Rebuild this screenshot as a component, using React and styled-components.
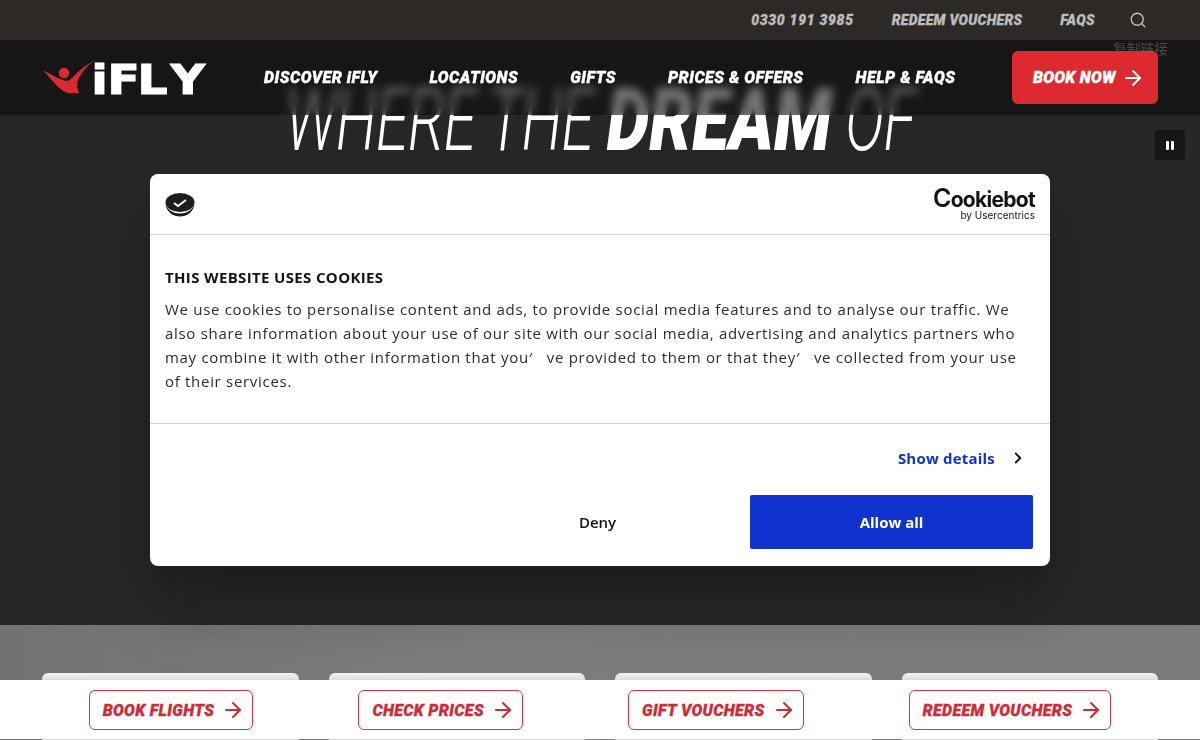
import React from 'react';
import styled, { createGlobalStyle } from 'styled-components';
import { Search, ArrowRight, ChevronRight } from 'lucide-react';

const Global = createGlobalStyle`
  html, body { margin: 0; padding: 0; background: #272727; }
  * { box-sizing: border-box; }
`;
const display = `Roboto, "Liberation Sans", sans-serif`;
const ui = `"Open Sans", "Noto Sans", sans-serif`;

const Page = styled.div`
  position: relative; width: 1200px; height: 740px; overflow: hidden;
  display: flex; flex-direction: column; background: #272727;
`;
const TopBar = styled.div`
  position: relative; z-index: 3;
  flex: 0 0 40px; background: #2d2926; display: flex; align-items: center; justify-content: flex-end;
  gap: 38px; padding: 0 53px 1px 0;
`;
const TopLink = styled.span`
  font: italic 900 14px ${display}; color: #bcbcbc; white-space: nowrap;
  -webkit-text-stroke: .3px #bcbcbc;
  letter-spacing: ${(p) => p.$spacing}px;
`;
const SearchIcon = styled(Search)`margin-left: -4px;`;
const Hero = styled.section`
  position: relative; flex: 0 0 585px; background: #272727; padding-top: 37px;
  display: flex; flex-direction: column; align-items: center;
`;
const Title = styled.h1`
  margin: 0; font: italic 300 87px/87px ${display}; color: #fff; white-space: nowrap;
  transform: scaleX(0.68);
  letter-spacing: -1px;
`;
const Strong = styled.strong`
  display: inline-block; font-weight: 900; letter-spacing: 0; margin: 0 21px;
  transform: scaleX(1.147);
`;
const Nav = styled.nav`
  position: absolute; z-index: 2; top: 0; left: 0; right: 0; height: 75px;
  background: rgba(10, 10, 10, 0.55); backdrop-filter: blur(5px);
  display: flex; align-items: center; padding: 0 42px;
`;
const Logo = styled.svg`flex: none; width: 168px; height: 52px; margin-right: 54px;`;
const NavLinks = styled.div`display: flex; gap: 52px; flex: 1;`;
const NavLink = styled.span`
  font: italic 900 16px ${display}; color: #fff; white-space: nowrap; letter-spacing: 0.5px;
  -webkit-text-stroke: .35px #fff;
`;
const BookNow = styled.div`
  position: relative; z-index: 1;
  width: 146px; height: 53px; border-radius: 6px; background: #dc2a30; color: #fff;
  display: flex; align-items: center; gap: 5px; padding-left: 21px;
  font: italic 900 16px ${display}; letter-spacing: 0.3px;
  -webkit-text-stroke: .35px #fff;
`;
const Ghost = styled.span`
  position: absolute; top: -2px; right: 32px; font: 13.75px/20px "Noto Sans CJK SC", sans-serif;
  color: #484848; filter: blur(0.6px);
`;
const PauseButton = styled.div`
  position: absolute; top: 90px; right: 15px; width: 30px; height: 30px; border-radius: 3px; background: #161616;
  display: flex; align-items: center; justify-content: center; gap: 2px;
`;
const PauseBar = styled.i`display: block; width: 3px; height: 9px; background: #fff; border-radius: 1px;`;
const Lower = styled.section`
  flex: 1; background: linear-gradient(90deg, #727272, #7d7d7d 40%, #7b7b7b);
  padding: 48px 42px 0; display: grid; grid-template-columns: repeat(4, 1fr); gap: 30px;
`;
const Card = styled.div`
  height: 200px; border-radius: 6px 6px 0 0; background: linear-gradient(#f4f4f4, #d9d9d9 8px, #d9d9d9);
`;
const BottomBar = styled.div`
  position: fixed; z-index: 4; left: 0; right: 0; bottom: 1px; height: 59px; background: #fff;
  display: flex; align-items: flex-start; justify-content: center; gap: 105px; padding-top: 10px;
`;
const Cta = styled.div`
  height: 40px; padding: 0 7px 0 13px; border: 1px solid #d4343f; border-radius: 6px; color: #cf2a35;
  display: flex; align-items: center; gap: 7px; white-space: nowrap;
  font: italic 900 16px ${display}; letter-spacing: 0.35px;
  -webkit-text-stroke: .3px #cf2a35;
`;
const Modal = styled.div`
  position: absolute; z-index: 5; left: 150px; top: 174px; width: 900px; height: 392px;
  background: #fff; border-radius: 8px; box-shadow: 0 32px 68px rgba(0,0,0,.3);
  display: flex; flex-direction: column; color: #141414; font-family: ${ui};
`;
const ModalHead = styled.header`
  flex: 0 0 61px; border-bottom: 1px solid #d6d6d6; display: flex; align-items: center;
  justify-content: space-between; padding: 0 15px;
`;
const CookieIcon = styled.svg`flex: none; width: 30px; height: 24px; margin-top: 2px;`;
const Brand = styled.div`display: flex; flex-direction: column; align-items: flex-end; color: #141414;`;
const BrandName = styled.span`font: 700 21px/20px Inter, sans-serif; letter-spacing: -0.7px;`;
const BrandInitial = styled.span`font-size: 25px; font-weight: 600;`;
const BrandSub = styled.span`font: 400 10px/11px Inter, sans-serif; color: #222;`;
const ModalBody = styled.div`
  flex: 0 0 189px; padding: 32px 15px 0; border-bottom: 1px solid #d6d6d6;
`;
const Heading = styled.h2`margin: 0 0 10px; font: 700 15px/20px ${ui}; letter-spacing: .35px;`;
const Copy = styled.p`margin: 0; font: 400 15px/24px ${ui}; color: #2c2c2c; letter-spacing: .7px; width: 855px;`;
const Details = styled.div`
  display: flex; justify-content: flex-end; align-items: center; gap: 14px; padding: 24px 23px 0 0;
  font: 700 15px/20px ${ui}; color: #1032cf; letter-spacing: .2px;
`;
const Actions = styled.div`
  display: flex; align-items: center; justify-content: flex-end; padding: 27px 17px 0 0;
`;
const Deny = styled.span`width: 283px; text-align: center; font: 600 15px ${ui}; margin-right: 11px;`;
const Allow = styled.div`
  width: 283px; height: 54px; background: #1032cf; border-radius: 2px; color: #fff;
  display: flex; align-items: center; justify-content: center; font: 700 15px ${ui};
`;

const links = ['DISCOVER iFLY', 'LOCATIONS', 'GIFTS', 'PRICES & OFFERS', 'HELP & FAQS'];
const ctas = ['BOOK FLIGHTS', 'CHECK PRICES', 'GIFT VOUCHERS', 'REDEEM VOUCHERS'];

const LogoMark = () => (
  <Logo viewBox="0 -6 168 52" aria-label="iFLY">
    <path fill="#d92a30" d="M1 12 C8 16 15 20 21 22 C24 23.5 27 23 30 20 C37 12 46 6 54 1 C45 8 36 17 35 26 C35 30 36 33 37 35 L26 35 C19 33 14 27 1 12 Z" />
    <circle cx="22" cy="15" r="5.2" fill="#d92a30" />
    <text transform="scale(1.15 1)" x="43 57 83 112" y="35.5" fontFamily="'DejaVu Sans', sans-serif" fontWeight="700" fontSize="41" fill="#fff" stroke="#fff" strokeWidth="1.2">iFLY</text>
  </Logo>
);

const CookieMark = () => (
  <CookieIcon viewBox="0 0 30 24">
    <ellipse cx="15" cy="9.5" rx="14.5" ry="9.5" fill="#1d1d1d" />
    <path d="M.5 12 C2 19 8 23.5 15 23.5 S28 19 29.5 12 C27 17 21 20.5 15 20.5 S3 17 .5 12Z" fill="#1d1d1d" />
    <path d="M9 10 l4 3 l8 -6" fill="none" stroke="#fff" strokeWidth="2" />
  </CookieIcon>
);

export default function App() {
  return (
    <Page>
      <Global />
      <TopBar>
        <TopLink $spacing={0.7}>0330 191 3985</TopLink>
        <TopLink $spacing={0.27}>REDEEM VOUCHERS</TopLink>
        <TopLink $spacing={0.4}>FAQS</TopLink>
        <SearchIcon size={18} color="#c4c4c4" strokeWidth={1.7} />
      </TopBar>
      <Hero>
        <Title>WHERE THE <Strong>DREAM</Strong> OF</Title>
        <Nav>
          <LogoMark />
          <NavLinks>{links.map((l) => <NavLink key={l}>{l}</NavLink>)}</NavLinks>
          <Ghost>复制链接</Ghost>
          <BookNow>BOOK NOW <ArrowRight size={24} strokeWidth={2} /></BookNow>
        </Nav>
        <PauseButton><PauseBar /><PauseBar /></PauseButton>
      </Hero>
      <Lower>{ctas.map((c) => <Card key={c} />)}</Lower>
      <BottomBar>
        {ctas.map((c) => <Cta key={c}>{c}<ArrowRight size={24} strokeWidth={2} /></Cta>)}
      </BottomBar>
      <Modal>
        <ModalHead>
          <CookieMark />
          <Brand><BrandName><BrandInitial>C</BrandInitial>ookiebot</BrandName><BrandSub>by Usercentrics</BrandSub></Brand>
        </ModalHead>
        <ModalBody>
          <Heading>THIS WEBSITE USES COOKIES</Heading>
          <Copy>We use cookies to personalise content and ads, to provide social media features and to analyse our traffic. We also share information about your use of our site with our social media, advertising and analytics partners who may combine it with other information that you′&nbsp;&nbsp;&nbsp;ve provided to them or that they′&nbsp;&nbsp;&nbsp;ve collected from your use of their services.</Copy>
        </ModalBody>
        <Details>Show details <ChevronRight size={18} color="#141414" strokeWidth={2.5} /></Details>
        <Actions><Deny>Deny</Deny><Allow>Allow all</Allow></Actions>
      </Modal>
    </Page>
  );
}
